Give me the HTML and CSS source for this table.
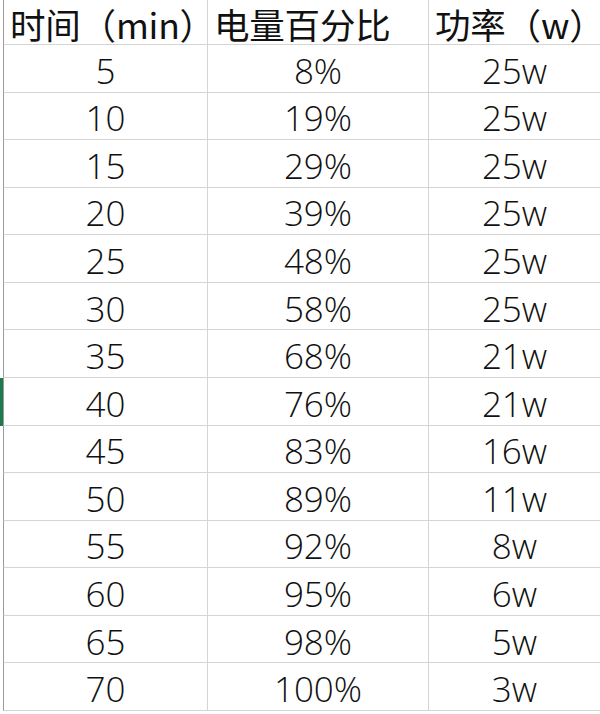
FILE: index.html
```html
<!DOCTYPE html>
<html lang="zh-CN">
<head>
<meta charset="utf-8">
<title>充电数据</title>
<link rel="stylesheet" href="styles.css">
</head>
<body>
<div class="sheet">
  <div class="gutter"></div><div class="cell head first">时间（min）</div><div class="cell head">电量百分比</div><div class="cell head">功率（w）</div>
  <div class="gutter"></div><div class="cell first">5</div><div class="cell">8%</div><div class="cell">25w</div>
  <div class="gutter"></div><div class="cell first">10</div><div class="cell">19%</div><div class="cell">25w</div>
  <div class="gutter"></div><div class="cell first">15</div><div class="cell">29%</div><div class="cell">25w</div>
  <div class="gutter"></div><div class="cell first">20</div><div class="cell">39%</div><div class="cell">25w</div>
  <div class="gutter"></div><div class="cell first">25</div><div class="cell">48%</div><div class="cell">25w</div>
  <div class="gutter"></div><div class="cell first">30</div><div class="cell">58%</div><div class="cell">25w</div>
  <div class="gutter"></div><div class="cell first">35</div><div class="cell">68%</div><div class="cell">21w</div>
  <div class="gutter active"></div><div class="cell first">40</div><div class="cell">76%</div><div class="cell">21w</div>
  <div class="gutter"></div><div class="cell first">45</div><div class="cell">83%</div><div class="cell">16w</div>
  <div class="gutter"></div><div class="cell first">50</div><div class="cell">89%</div><div class="cell">11w</div>
  <div class="gutter"></div><div class="cell first">55</div><div class="cell">92%</div><div class="cell">8w</div>
  <div class="gutter"></div><div class="cell first">60</div><div class="cell">95%</div><div class="cell">6w</div>
  <div class="gutter"></div><div class="cell first">65</div><div class="cell">98%</div><div class="cell">5w</div>
  <div class="gutter"></div><div class="cell first">70</div><div class="cell">100%</div><div class="cell">3w</div>
</div>
</body>
</html>
```
FILE: styles.css
```css
html, body {
  margin: 0;
  padding: 0;
  background: #ffffff;
}

.sheet {
  display: grid;
  grid-template-columns: 3px 204px 221px 172px;
  grid-template-rows: 45px repeat(14, 47.57px);
  font-family: "Open Sans", "Noto Sans CJK SC", sans-serif;
  font-weight: 300;
  font-size: 35px;
  color: #111111;
}

.gutter {
  background: #ffffff;
}

.gutter.active {
  background: #1d7a4c;
}

.cell {
  display: flex;
  align-items: center;
  justify-content: center;
  border-left: 1px solid #d4d4d4;
  border-bottom: 1px solid #d4d4d4;
  box-sizing: border-box;
  padding-top: 4px;
  line-height: 1;
  white-space: nowrap;
}

.cell.first {
  border-left-color: #9a9a9a;
}

.cell.head {
  justify-content: flex-start;
  padding-left: 6px;
  padding-top: 3px;
  font-size: 35.5px;
  font-weight: 400;
  letter-spacing: -0.2px;
  font-family: "Noto Sans CJK SC", sans-serif;
}
```
